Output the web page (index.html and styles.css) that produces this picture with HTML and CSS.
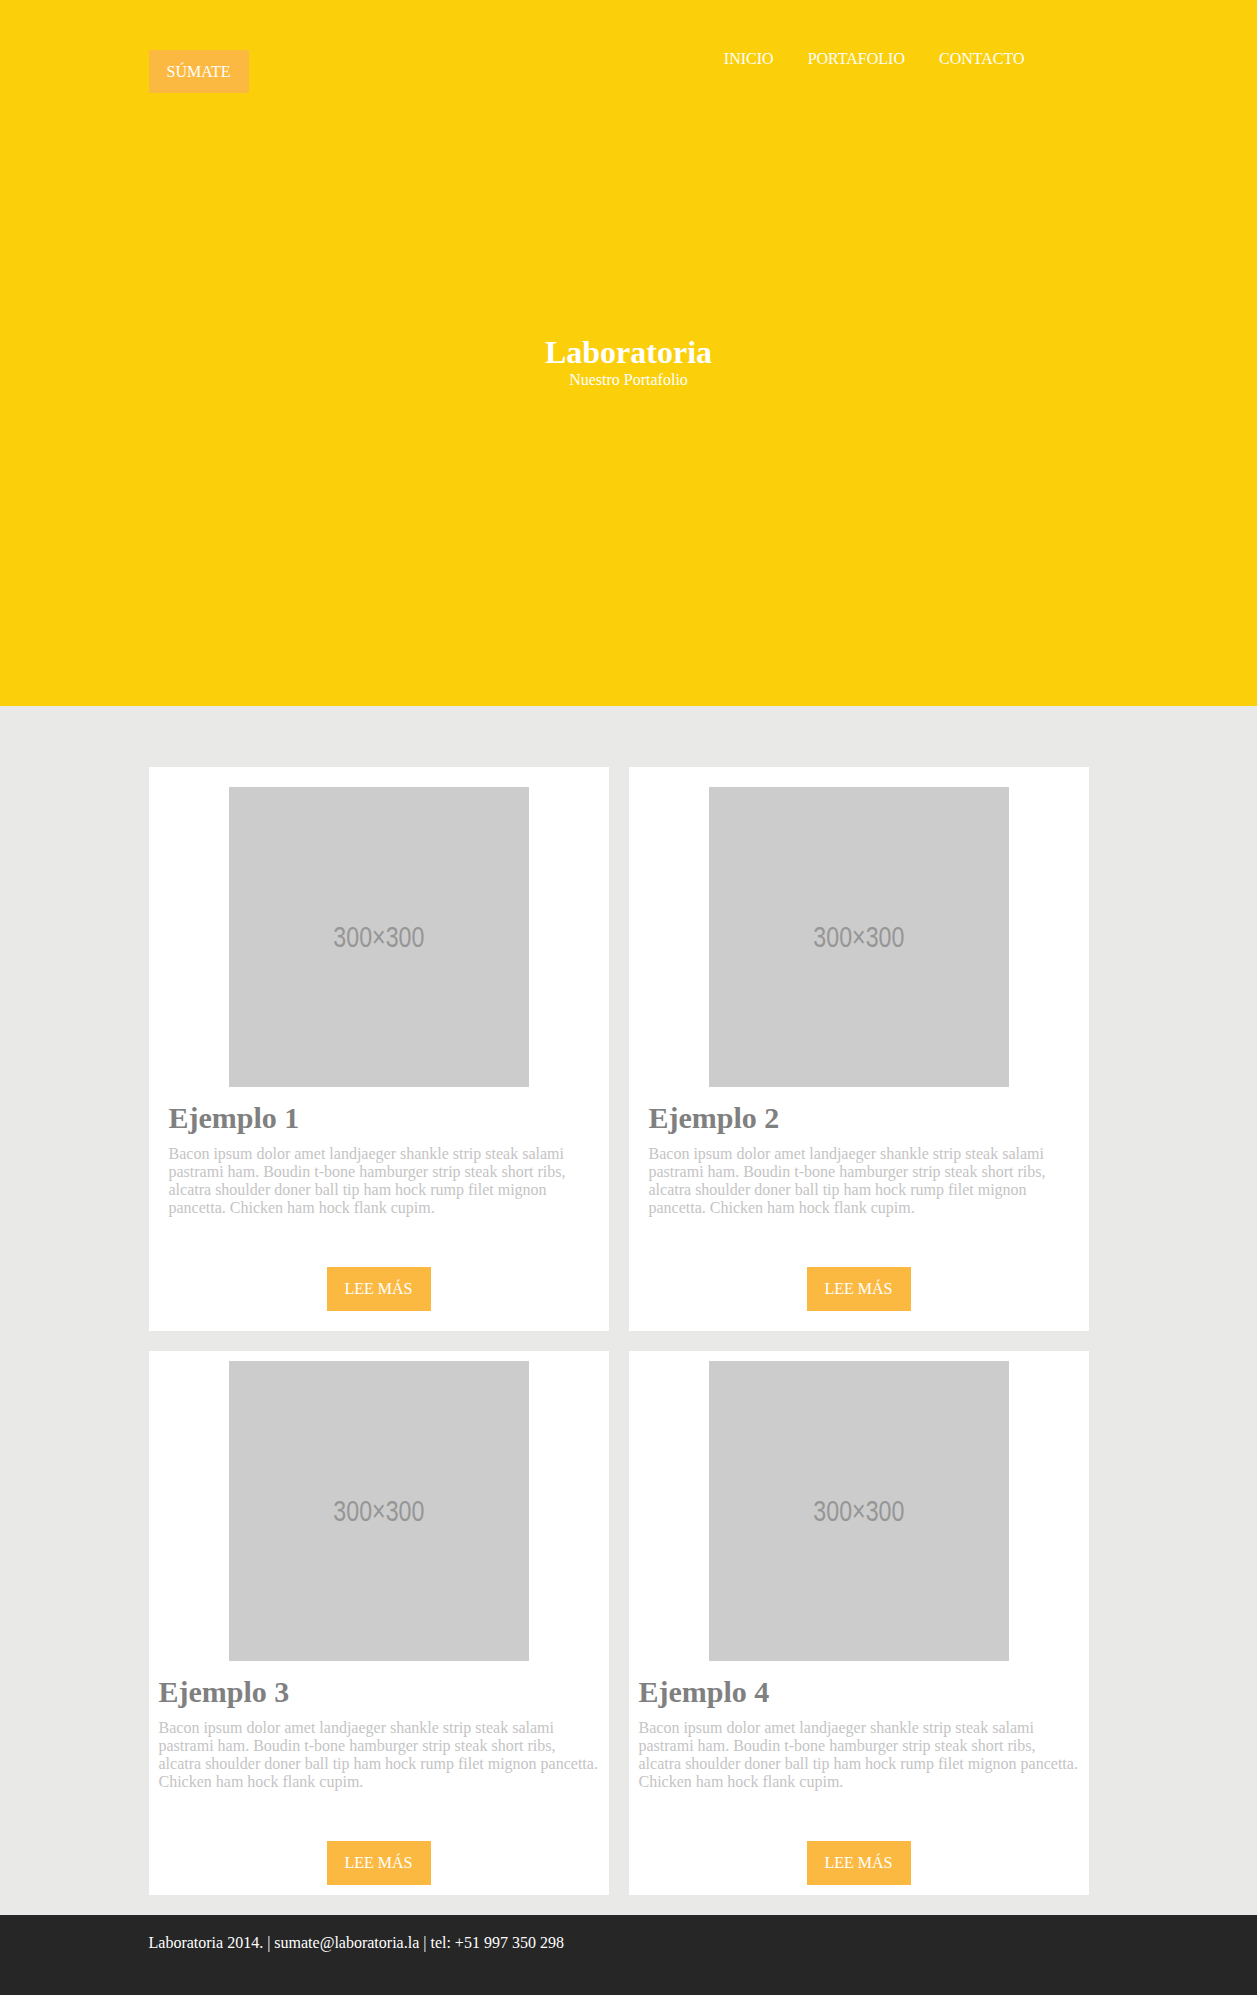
FILE: index.html
```html
<!DOCTYPE html>
<html lang="es">
<head>
<meta charset="utf-8">
<title>Laboratoria - Portafolio</title>
<link rel="stylesheet" href="styles.css">
</head>
<body>
<header class="site-header">
  <div class="container topbar">
    <a class="btn btn-join" href="#">SÚMATE</a>
    <nav class="main-nav">
      <a href="#">INICIO</a>
      <a href="#">PORTAFOLIO</a>
      <a href="#">CONTACTO</a>
    </nav>
  </div>
  <div class="hero">
    <h1 class="hero-title">Laboratoria</h1>
    <p class="hero-sub">Nuestro Portafolio</p>
  </div>
</header>

<main class="portfolio">
  <div class="container grid">
    <article class="card">
      <div class="thumb"><span>300×300</span></div>
      <h2 class="card-title">Ejemplo 1</h2>
      <p class="card-text">Bacon ipsum dolor amet landjaeger shankle strip steak salami pastrami ham. Boudin t-bone hamburger strip steak short ribs, alcatra shoulder doner ball tip ham hock rump filet mignon pancetta. Chicken ham hock flank cupim.</p>
      <div class="card-action"><a class="btn btn-more" href="#">LEE MÁS</a></div>
    </article>
    <article class="card">
      <div class="thumb"><span>300×300</span></div>
      <h2 class="card-title">Ejemplo 2</h2>
      <p class="card-text">Bacon ipsum dolor amet landjaeger shankle strip steak salami pastrami ham. Boudin t-bone hamburger strip steak short ribs, alcatra shoulder doner ball tip ham hock rump filet mignon pancetta. Chicken ham hock flank cupim.</p>
      <div class="card-action"><a class="btn btn-more" href="#">LEE MÁS</a></div>
    </article>
    <article class="card card-tight">
      <div class="thumb"><span>300×300</span></div>
      <h2 class="card-title">Ejemplo 3</h2>
      <p class="card-text">Bacon ipsum dolor amet landjaeger shankle strip steak salami pastrami ham. Boudin t-bone hamburger strip steak short ribs, alcatra shoulder doner ball tip ham hock rump filet mignon pancetta. Chicken ham hock flank cupim.</p>
      <div class="card-action"><a class="btn btn-more" href="#">LEE MÁS</a></div>
    </article>
    <article class="card card-tight">
      <div class="thumb"><span>300×300</span></div>
      <h2 class="card-title">Ejemplo 4</h2>
      <p class="card-text">Bacon ipsum dolor amet landjaeger shankle strip steak salami pastrami ham. Boudin t-bone hamburger strip steak short ribs, alcatra shoulder doner ball tip ham hock rump filet mignon pancetta. Chicken ham hock flank cupim.</p>
      <div class="card-action"><a class="btn btn-more" href="#">LEE MÁS</a></div>
    </article>
  </div>
</main>

<footer class="site-footer">
  <div class="container">
    <p class="footer-text">Laboratoria 2014. | sumate@laboratoria.la | tel: +51 997 350 298</p>
  </div>
</footer>
</body>
</html>
```

FILE: styles.css
```css
* {
  box-sizing: border-box;
}

html, body {
  margin: 0;
  padding: 0;
}

body {
  font-family: "Liberation Serif", "Times New Roman", serif;
  font-size: 16px;
  line-height: 18px;
  color: #333;
  background: #e9e9e7;
}

a {
  text-decoration: none;
}

.container {
  width: 960px;
  margin: 0 auto;
}

/* Header */
.site-header {
  background: #fccf0b;
  height: 706px;
  padding-top: 50px;
}

.topbar {
  display: flex;
  justify-content: space-between;
  align-items: flex-start;
}

.btn {
  display: inline-block;
  background: #fcb941;
  color: #ffffff;
  font-size: 16px;
}

.btn-join {
  padding: 12px 18px;
  line-height: 19px;
}

.main-nav {
  display: flex;
  gap: 34px;
  margin-right: 84px;
}

.main-nav a {
  color: #ffffff;
  font-size: 16px;
  line-height: 18px;
}

.hero {
  text-align: center;
  padding-top: 241px;
  color: #ffffff;
}

.hero-title {
  margin: 0;
  font-size: 32px;
  line-height: 36px;
  font-weight: bold;
}

.hero-sub {
  margin: 0;
  font-size: 16px;
  line-height: 19px;
}

/* Portfolio */
.portfolio {
  background: #e9e9e7;
  padding: 61px 0 20px;
}

.grid {
  display: grid;
  grid-template-columns: 460px 460px;
  column-gap: 20px;
  row-gap: 20px;
}

.card {
  background: #ffffff;
  padding: 20px;
}

.card-tight {
  padding: 10px;
}

.thumb {
  width: 300px;
  height: 300px;
  margin: 0 auto;
  background: #cccccc;
  display: flex;
  align-items: center;
  justify-content: center;
}

.thumb span {
  display: inline-block;
  font-family: "Liberation Sans", "DejaVu Sans", sans-serif;
  font-size: 29px;
  line-height: 30px;
  color: #969696;
  transform: scaleX(0.8);
}

.card-title {
  margin: 14px 0 0;
  font-size: 30px;
  line-height: 34px;
  font-weight: bold;
  color: #808080;
}

.card-text {
  margin: 10px 0 0;
  font-size: 16px;
  line-height: 18px;
  color: #c4c4c4;
}

.card-action {
  display: flex;
  justify-content: center;
  margin-top: 50px;
}

.btn-more {
  padding: 13px 18px;
  line-height: 18px;
}

/* Footer */
.site-footer {
  background: #262626;
  padding: 19px 0 43px;
}

.footer-text {
  margin: 0;
  color: #ffffff;
  font-size: 16px;
  line-height: 18px;
}
```
